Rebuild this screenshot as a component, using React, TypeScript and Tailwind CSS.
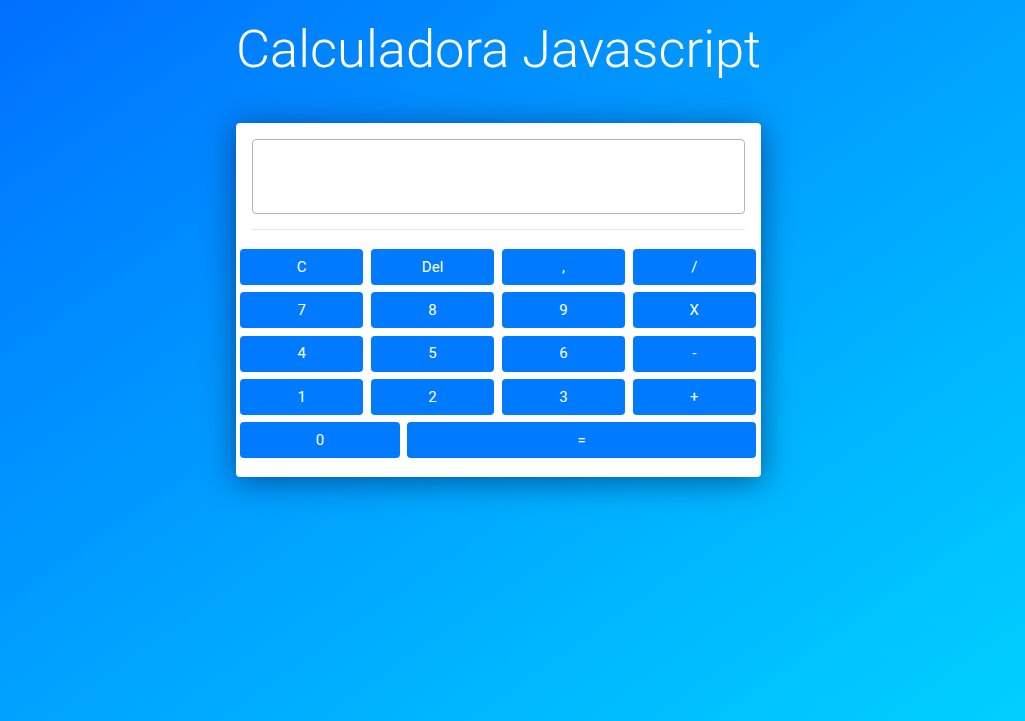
import React, { useState } from 'react';

const rows: string[][] = [
  ['C', 'Del', ',', '/'],
  ['7', '8', '9', 'X'],
  ['4', '5', '6', '-'],
  ['1', '2', '3', '+'],
];

export default function App() {
  const [display, setDisplay] = useState('');

  const press = (key: string) => {
    if (key === 'C') return setDisplay('');
    if (key === 'Del') return setDisplay((d) => d.slice(0, -1));
    if (key === '=') {
      try {
        const expr = display.replace(/X/g, '*').replace(/,/g, '.');
        // eslint-disable-next-line no-new-func
        setDisplay(String(Function(`return (${expr})`)()).replace('.', ','));
      } catch {
        setDisplay('Erro');
      }
      return;
    }
    setDisplay((d) => d + key);
  };

  const btn =
    'h-9 rounded-[4px] bg-[#007bff] text-[15px] text-white hover:bg-[#0069d9] transition-colors';

  return (
    <div
      className="min-h-screen w-full bg-linear-to-br from-[#0070ff] to-[#00d0ff] flex flex-col items-center pr-[28px]"
      style={{ fontFamily: 'Roboto, "Liberation Sans", sans-serif' }}
    >
      <h1 className="mt-[17px] text-[52.5px] leading-[64px] font-light text-white">Calculadora Javascript</h1>

      <div className="mt-[42px] w-[525px] bg-white rounded-[4px] shadow-[0_4px_32px_rgba(0,30,90,0.6)] pl-[4px] pr-[5px] pt-[16px] pb-[19px]">
        {/* Display */}
        <div className="pl-[12px] pr-[11px]">
          <input
            type="text"
            value={display}
            readOnly
            className="w-full h-[75px] rounded-[4px] border border-[#b4b4b4] px-3 text-right text-3xl text-gray-800 outline-none"
          />
          <hr className="mt-[15px] border-t border-[#e4e4e4]" />
        </div>

        {/* Keys */}
        <div className="mt-[19px] flex flex-col gap-[7.3px]">
          {rows.map((row, i) => (
            <div key={i} className="grid grid-cols-4 gap-[7.5px]">
              {row.map((k) => (
                <button key={k} onClick={() => press(k)} className={btn}>
                  {k}
                </button>
              ))}
            </div>
          ))}
          <div className="flex gap-[7px]">
            <button onClick={() => press('0')} className={`${btn} w-[160px]`}>
              0
            </button>
            <button onClick={() => press('=')} className={`${btn} flex-1`}>
              =
            </button>
          </div>
        </div>
      </div>
    </div>
  );
}
